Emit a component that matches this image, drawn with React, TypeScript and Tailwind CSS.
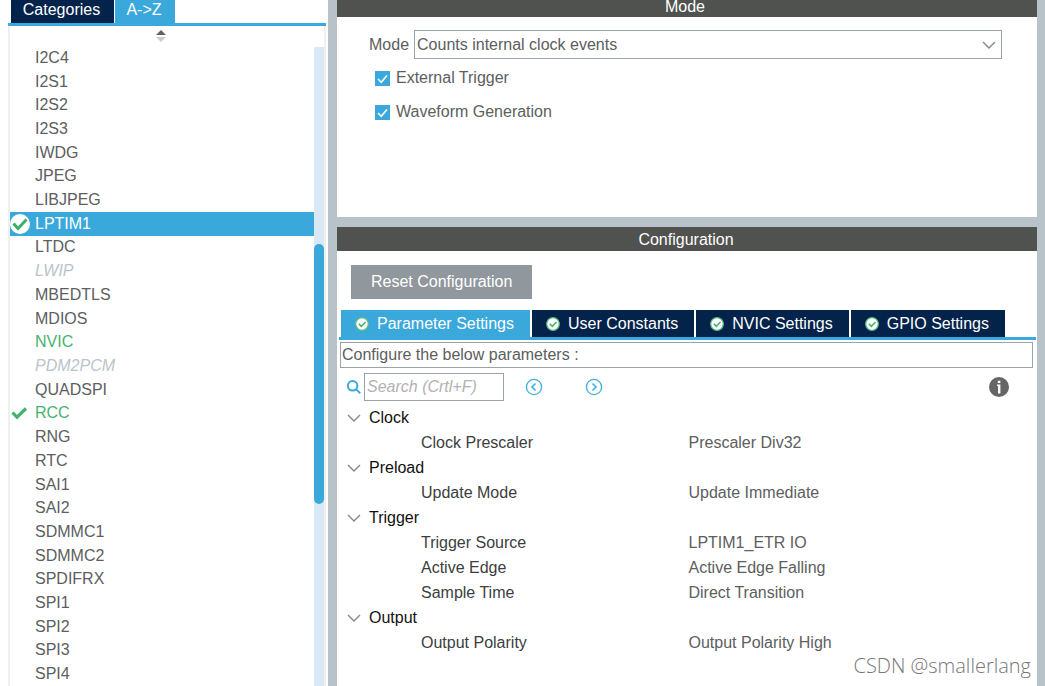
import { useState } from "react";

type Status = "selected" | "enabled" | "disabled" | "ok";
type Peripheral = { name: string; status?: Status };

const PERIPHERALS: Peripheral[] = [
  { name: "I2C4" },
  { name: "I2S1" },
  { name: "I2S2" },
  { name: "I2S3" },
  { name: "IWDG" },
  { name: "JPEG" },
  { name: "LIBJPEG" },
  { name: "LPTIM1", status: "selected" },
  { name: "LTDC" },
  { name: "LWIP", status: "disabled" },
  { name: "MBEDTLS" },
  { name: "MDIOS" },
  { name: "NVIC", status: "enabled" },
  { name: "PDM2PCM", status: "disabled" },
  { name: "QUADSPI" },
  { name: "RCC", status: "ok" },
  { name: "RNG" },
  { name: "RTC" },
  { name: "SAI1" },
  { name: "SAI2" },
  { name: "SDMMC1" },
  { name: "SDMMC2" },
  { name: "SPDIFRX" },
  { name: "SPI1" },
  { name: "SPI2" },
  { name: "SPI3" },
  { name: "SPI4" },
];

const TEXT_COLOR: Record<Status, string> = {
  selected: "bg-[#3aa8db] text-white",
  enabled: "text-[#45b370]",
  disabled: "italic text-[#b9c4ca]",
  ok: "text-[#45b370]",
};

const TABS = ["Parameter Settings", "User Constants", "NVIC Settings", "GPIO Settings"];

const GROUPS = [
  { name: "Clock", params: [["Clock Prescaler", "Prescaler Div32"]] },
  { name: "Preload", params: [["Update Mode", "Update Immediate"]] },
  {
    name: "Trigger",
    params: [
      ["Trigger Source", "LPTIM1_ETR IO"],
      ["Active Edge", "Active Edge Falling"],
      ["Sample Time", "Direct Transition"],
    ],
  },
  { name: "Output", params: [["Output Polarity", "Output Polarity High"]] },
];

function Chevron({ className }: { className: string }) {
  return (
    <svg viewBox="0 0 14 8" className={className} fill="none" stroke="#858585" strokeWidth={1.4}>
      <path d="M1 1l6 6 6-6" />
    </svg>
  );
}

function StatusIcon({ status }: { status?: Status }) {
  if (status === "selected") {
    return (
      <svg viewBox="0 0 20 20" className="h-5 w-5">
        <circle cx="10" cy="10" r="10" fill="#fff" />
        <path d="M3.5 9.5l4.5 5 8.5-9" fill="none" stroke="#3fae69" strokeWidth={3} />
      </svg>
    );
  }
  if (status === "ok") {
    return (
      <svg viewBox="0 0 20 20" className="h-5 w-5">
        <path d="M2.5 9.5l4.5 4.7L16 5.5" fill="none" stroke="#45b370" strokeWidth={3.2} />
      </svg>
    );
  }
  return null;
}

function TabCheck() {
  return (
    <svg viewBox="0 0 14 14" className="h-3.5 w-3.5">
      <circle cx="7" cy="7" r="6.3" fill="#fff" stroke="#5dba80" strokeWidth={1.2} />
      <path d="M3.8 6.8l2.5 2.5 4.2-4.3" fill="none" stroke="#45b370" strokeWidth={1.6} />
    </svg>
  );
}

function StepIcon({ d }: { d: string }) {
  return (
    <svg viewBox="0 0 18 18" className="h-[18px] w-[18px]" fill="none" stroke="#45b0e0">
      <circle cx="9" cy="9" r="7.6" strokeWidth={1.4} />
      <path d={d} strokeWidth={1.7} />
    </svg>
  );
}

function PeripheralList() {
  return (
    <aside className="flex w-[328px] shrink-0 flex-col bg-white pl-2">
      <div className="mr-[2px] flex h-[26px] gap-px border-b-3 border-[#3aa8db] pl-[3px]">
        <button className="w-[103px] bg-[#03234b] pr-[2px] pb-1 text-center leading-5 text-white">Categories</button>
        <button className="w-[60px] bg-[#3aa8db] pr-[2px] pb-1 text-center leading-5 text-white">A-&gt;Z</button>
      </div>
      <div className="mr-[2px] flex flex-1 flex-col border-x-2 border-[#eeeff0]">
        <button aria-label="Toggle sort order" className="flex h-5 items-center justify-center pr-3">
          <svg viewBox="0 0 12 14" className="h-3.5 w-3">
            <path d="M6 1l5 5H1z" fill="#626262" />
            <path d="M6 13l5-5H1z" fill="#cbcbcb" />
          </svg>
        </button>
        <div className="flex flex-1">
          <ul className="flex flex-1 flex-col">
            {PERIPHERALS.map((p) => (
              <li key={p.name} className="flex flex-1">
                <button
                  className={`flex flex-1 items-center text-left leading-5 ${
                    p.status ? TEXT_COLOR[p.status] : "text-[#5c5e60]"
                  }`}
                >
                  <span className="w-[25px] shrink-0">
                    <StatusIcon status={p.status} />
                  </span>
                  {p.name}
                </button>
              </li>
            ))}
          </ul>
          <div className="mt-px w-2.5 bg-[#d8e8f5] pt-[197px]">
            <div className="h-[260px] rounded-full bg-[#3aa8db]" />
          </div>
        </div>
      </div>
    </aside>
  );
}

function Check({ label }: { label: string }) {
  const [on, setOn] = useState(true);
  return (
    <label className="flex h-[34px] items-center gap-[6px]">
      <span className="relative h-[15px] w-[15px]">
        <input
          type="checkbox"
          checked={on}
          onChange={(e) => setOn(e.target.checked)}
          className="block h-[15px] w-[15px] appearance-none border border-[#3aa8db] checked:bg-[#3aa8db]"
        />
        {on && (
          <svg viewBox="0 0 15 15" className="pointer-events-none absolute inset-0 h-full w-full">
            <path d="M3 8l3.2 3.3L12 4.5" fill="none" stroke="#fff" strokeWidth={1.7} />
          </svg>
        )}
      </span>
      {label}
    </label>
  );
}

function ModePanel() {
  return (
    <section className="h-[217px] bg-white">
      <h2 className="h-[17px] bg-[#50524f] pr-1 text-center leading-[14px] text-white">Mode</h2>
      <div className="pt-[13px] pr-[35px] pl-8">
        <div className="flex items-center gap-[5px]">
          <label htmlFor="mode">Mode</label>
          <div className="relative flex-1">
            <select
              id="mode"
              className="block h-[29px] w-full appearance-none border border-[#98a3aa] bg-white px-[2px]"
            >
              <option>Counts internal clock events</option>
            </select>
            <Chevron className="pointer-events-none absolute top-[11px] right-[6px] h-2 w-3.5" />
          </div>
        </div>
        <div className="pt-[2px] pl-[6px]">
          <Check label="External Trigger" />
          <Check label="Waveform Generation" />
        </div>
      </div>
    </section>
  );
}

function ParameterTable() {
  const [closed, setClosed] = useState<string[]>([]);
  const toggle = (name: string) =>
    setClosed((c) => (c.includes(name) ? c.filter((n) => n !== name) : [...c, name]));

  return (
    <table className="w-full table-fixed text-left">
      <colgroup>
        <col className="w-1/2" />
        <col className="w-1/2" />
      </colgroup>
      {GROUPS.map((g) => (
        <tbody key={g.name}>
          <tr className="h-[25px]">
            <th colSpan={2} className="p-0 font-normal text-[#111]">
              <button onClick={() => toggle(g.name)} className="flex items-center gap-2 pl-[7px] leading-6">
                <Chevron className="h-2 w-3.5" />
                {g.name}
              </button>
            </th>
          </tr>
          {!closed.includes(g.name) &&
            g.params.map(([key, value]) => (
              <tr key={key} className="h-[25px] leading-6">
                <th className="p-0 pl-[81px] font-normal text-[#3c3e40]">{key}</th>
                <td className="p-0 pl-[2px]">{value}</td>
              </tr>
            ))}
        </tbody>
      ))}
    </table>
  );
}

function ConfigurationPanel() {
  const [tab, setTab] = useState(TABS[0]);
  return (
    <section className="relative flex-1 bg-white">
      <h2 className="h-6 bg-[#50524f] pr-[2px] text-center leading-[26px] text-white">Configuration</h2>
      <div className="px-3.5 pt-3.5 pb-[11px]">
        <button className="h-[34px] bg-[#90979d] px-5 text-white">Reset Configuration</button>
      </div>
      <div className="mr-px ml-[2px] flex h-[30px] gap-[2px] border-b-3 border-[#3aa8db] pl-[2px]">
        {TABS.map((t) => (
          <button
            key={t}
            onClick={() => setTab(t)}
            className={`flex items-center gap-2 pr-4 pl-3.5 text-white ${t === tab ? "bg-[#3aa8db]" : "bg-[#03234b]"}`}
          >
            <TabCheck />
            {t}
          </button>
        ))}
      </div>
      <div className="mr-1 ml-[3px]">
        <p className="mt-[2px] h-[26px] border border-[#98a3aa] px-px leading-6">Configure the below parameters :</p>
        <div className="flex h-[37px] items-center pr-6 pl-[6px]">
          <label htmlFor="search" aria-label="Search parameters">
            <svg viewBox="0 0 16 16" className="h-4 w-4" fill="none" stroke="#3aa8db" strokeWidth={2}>
              <circle cx="6.6" cy="6.8" r="4.8" />
              <path d="M10.2 10.4l4 4" />
            </svg>
          </label>
          <input
            id="search"
            type="text"
            placeholder="Search (Crtl+F)"
            className="ml-[2px] h-7 w-[140px] border border-[#98a3aa] px-[2px] placeholder:text-[#b2b2b2] placeholder:italic"
          />
          <button aria-label="Previous" className="ml-[21px]">
            <StepIcon d="M10.5 5.5L7 9l3.5 3.5" />
          </button>
          <button aria-label="Next" className="ml-[42px]">
            <StepIcon d="M7.5 5.5L11 9l-3.5 3.5" />
          </button>
          <button aria-label="Information" className="ml-auto">
            <svg viewBox="0 0 20 20" className="h-5 w-5">
              <circle cx="10" cy="10" r="10" fill="#666" />
              <path d="M8.8 3.8h2.6v2.2H8.8zM8 7.6h3.4v9H9V9H8z" fill="#fff" />
            </svg>
          </button>
        </div>
        <ParameterTable />
      </div>
      <p className="absolute right-[6px] bottom-1 font-['Open_Sans',sans-serif] text-xl leading-8 font-light text-[#777]">
        CSDN @smallerlang
      </p>
    </section>
  );
}

export default function App() {
  return (
    <div className="flex min-h-screen bg-[#b8c3c9] font-['Liberation_Sans',Arial,sans-serif] text-base text-[#5c5e60]">
      <PeripheralList />
      <main className="mr-2 ml-[9px] flex flex-1 flex-col gap-2.5">
        <ModePanel />
        <ConfigurationPanel />
      </main>
    </div>
  );
}
